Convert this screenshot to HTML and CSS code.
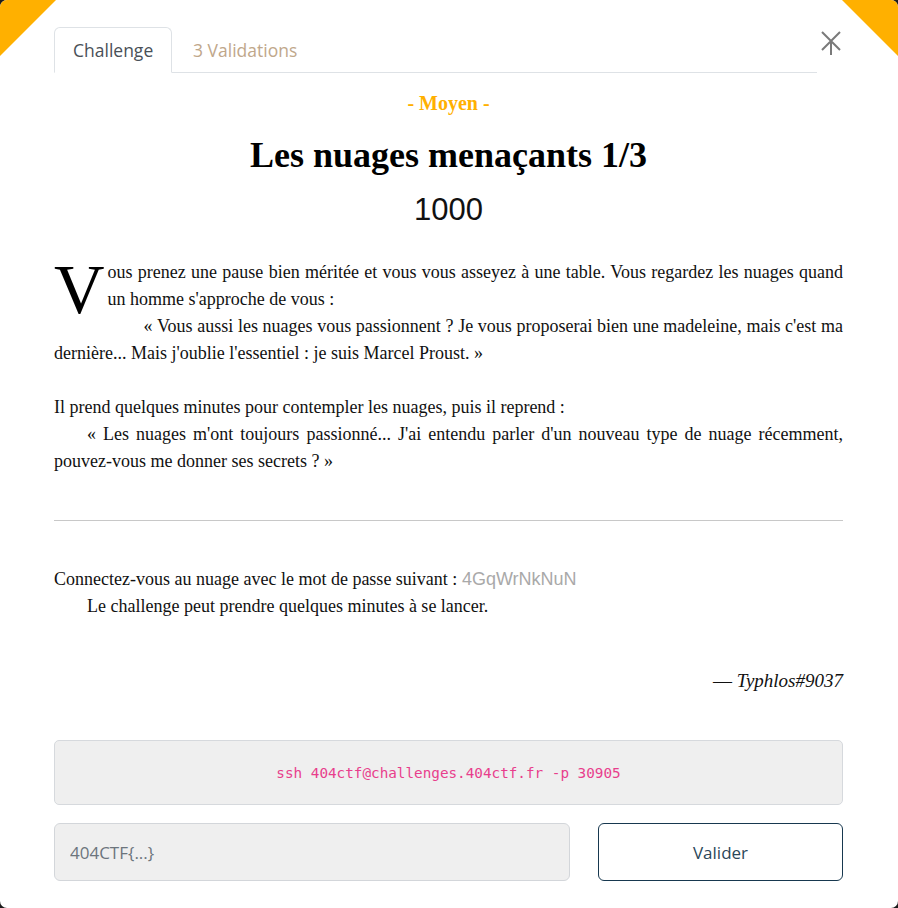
FILE: index.html
```html
<!DOCTYPE html>
<html lang="fr">
<head>
<meta charset="utf-8">
<title>Les nuages menaçants 1/3</title>
<link rel="stylesheet" href="styles.css">
</head>
<body>
<div class="modal">
  <div class="corner corner-left"></div>
  <div class="corner corner-right"></div>
  <div class="header">
    <ul class="tabs">
      <li class="tab active">Challenge</li>
      <li class="tab">3 Validations</li>
    </ul>
    <button class="close" aria-label="Fermer">
      <svg width="20" height="26" viewBox="0 0 20 26"><path d="M1 1 L19 19 M19 1 L1 19 M10 10 L10 24" stroke="#7a7a7a" stroke-width="2" fill="none"/></svg>
    </button>
  </div>
  <div class="content">
    <div class="difficulty">- Moyen -</div>
    <h2 class="title">Les nuages menaçants 1/3</h2>
    <div class="points">1000</div>
    <div class="story">
      <span class="dropcap">V</span>
      <p class="line">ous prenez une pause bien méritée et vous vous asseyez à une table. Vous regardez les nuages quand un homme s'approche de vous :</p>
      <p class="line quote-first">« Vous aussi les nuages vous passionnent ? Je vous proposerai bien une madeleine, mais c'est ma dernière... Mais j'oublie l'essentiel : je suis Marcel Proust. »</p>
      <p class="line blank">&nbsp;</p>
      <p class="line">Il prend quelques minutes pour contempler les nuages, puis il reprend :</p>
      <p class="line indent">« Les nuages m'ont toujours passionné... J'ai entendu parler d'un nouveau type de nuage récemment, pouvez-vous me donner ses secrets ? »</p>
    </div>
    <hr class="sep">
    <div class="info">
      <p class="line">Connectez-vous au nuage avec le mot de passe suivant : <span class="password">4GqWrNkNuN</span></p>
      <p class="line indent">Le challenge peut prendre quelques minutes à se lancer.</p>
    </div>
    <div class="author">— <em>Typhlos#9037</em></div>
    <div class="command"><code>ssh 404ctf@challenges.404ctf.fr -p 30905</code></div>
    <form class="submit">
      <input class="flag" type="text" placeholder="404CTF{...}">
      <button class="validate" type="button">Valider</button>
    </form>
  </div>
</div>
</body>
</html>
```

FILE: styles.css
```css
* { box-sizing: border-box; }
html, body { margin: 0; padding: 0; }
body {
  background: #1b1b1b;
  width: 898px;
  height: 908px;
  overflow: hidden;
}
.modal {
  position: relative;
  width: 898px;
  height: 908px;
  background: #ffffff;
  border-radius: 7px;
  overflow: hidden;
  padding: 27px 55px 0 54px;
}
.corner {
  position: absolute;
  top: 0;
  width: 56px;
  height: 56px;
  background: #ffb000;
}
.corner-left { left: 0; clip-path: polygon(0 0, 100% 0, 0 100%); }
.corner-right { right: 0; clip-path: polygon(0 0, 100% 0, 100% 100%); }

.header {
  position: relative;
  display: flex;
  align-items: flex-end;
}
.tabs {
  list-style: none;
  margin: 0;
  padding: 0;
  display: flex;
  width: 763px;
  border-bottom: 1px solid #dee2e6;
}
.tab {
  height: 46px;
  padding: 0 18px 0 20px;
  margin-bottom: -1px;
  display: flex;
  align-items: center;
  font-family: "Open Sans", sans-serif;
  font-size: 17.5px;
  color: #bfa78b;
  border: 1px solid transparent;
  border-radius: 6px 6px 0 0;
}
.tab.active {
  color: #495057;
  border-color: #dee2e6 #dee2e6 #ffffff;
  background: #ffffff;
  width: 118px;
  padding: 0 0 0 18px;
}
.close {
  position: absolute;
  right: 2px;
  top: 4px;
  background: none;
  border: 0;
  padding: 0;
  width: 20px;
  height: 26px;
}
.close svg { display: block; }

.content {
  font-family: "Liberation Serif", "Times New Roman", serif;
  font-size: 18px;
  color: #111;
}
.difficulty {
  text-align: center;
  color: #ffb000;
  font-weight: bold;
  font-size: 20px;
  line-height: 24px;
  margin-top: 18px;
}
.title {
  text-align: center;
  font-size: 36px;
  font-weight: bold;
  line-height: 40px;
  margin: 20px 0 0;
  color: #000;
}
.points {
  text-align: center;
  font-family: "Liberation Sans", Arial, sans-serif;
  font-size: 31px;
  line-height: 36px;
  margin-top: 17px;
  color: #111;
}
.story {
  margin-top: 31px;
  text-align: justify;
}
.line {
  margin: 0;
  line-height: 27px;
}
.dropcap {
  float: left;
  font-size: 70px;
  line-height: 62px;
  margin-right: 3px;
  color: #000;
}
.quote-first { text-indent: 36px; }
.indent { text-indent: 33px; }
.sep {
  border: 0;
  border-top: 1px solid #c8c8c8;
  margin: 45px 0 0;
}
.info { margin-top: 45px; text-align: justify; }
.password {
  font-family: "Liberation Sans", Arial, sans-serif;
  color: #a9a9a9;
  font-size: 18px;
}
.author {
  text-align: right;
  margin-top: 47px;
  line-height: 27px;
  font-size: 19px;
}
.command {
  margin-top: 46px;
  height: 65px;
  background: #efefef;
  border: 1px solid #d6d9dd;
  border-radius: 5px;
  display: flex;
  align-items: center;
  justify-content: center;
}
.command code {
  font-family: "DejaVu Sans Mono", monospace;
  font-size: 14.3px;
  color: #e83e8c;
}
.submit {
  display: flex;
  gap: 28px;
  margin-top: 18px;
}
.flag {
  flex: 1;
  height: 58px;
  background: #efefef;
  border: 1px solid #d3d6da;
  border-radius: 6px;
  padding: 0 15px;
  font-family: "Open Sans", sans-serif;
  font-size: 17px;
  color: #495057;
}
.flag::placeholder { color: #6c757d; }
.validate {
  width: 245px;
  height: 58px;
  background: #fff;
  border: 1px solid #17384f;
  border-radius: 6px;
  font-family: "Open Sans", sans-serif;
  font-size: 17px;
  color: #2b4759;
}
```
